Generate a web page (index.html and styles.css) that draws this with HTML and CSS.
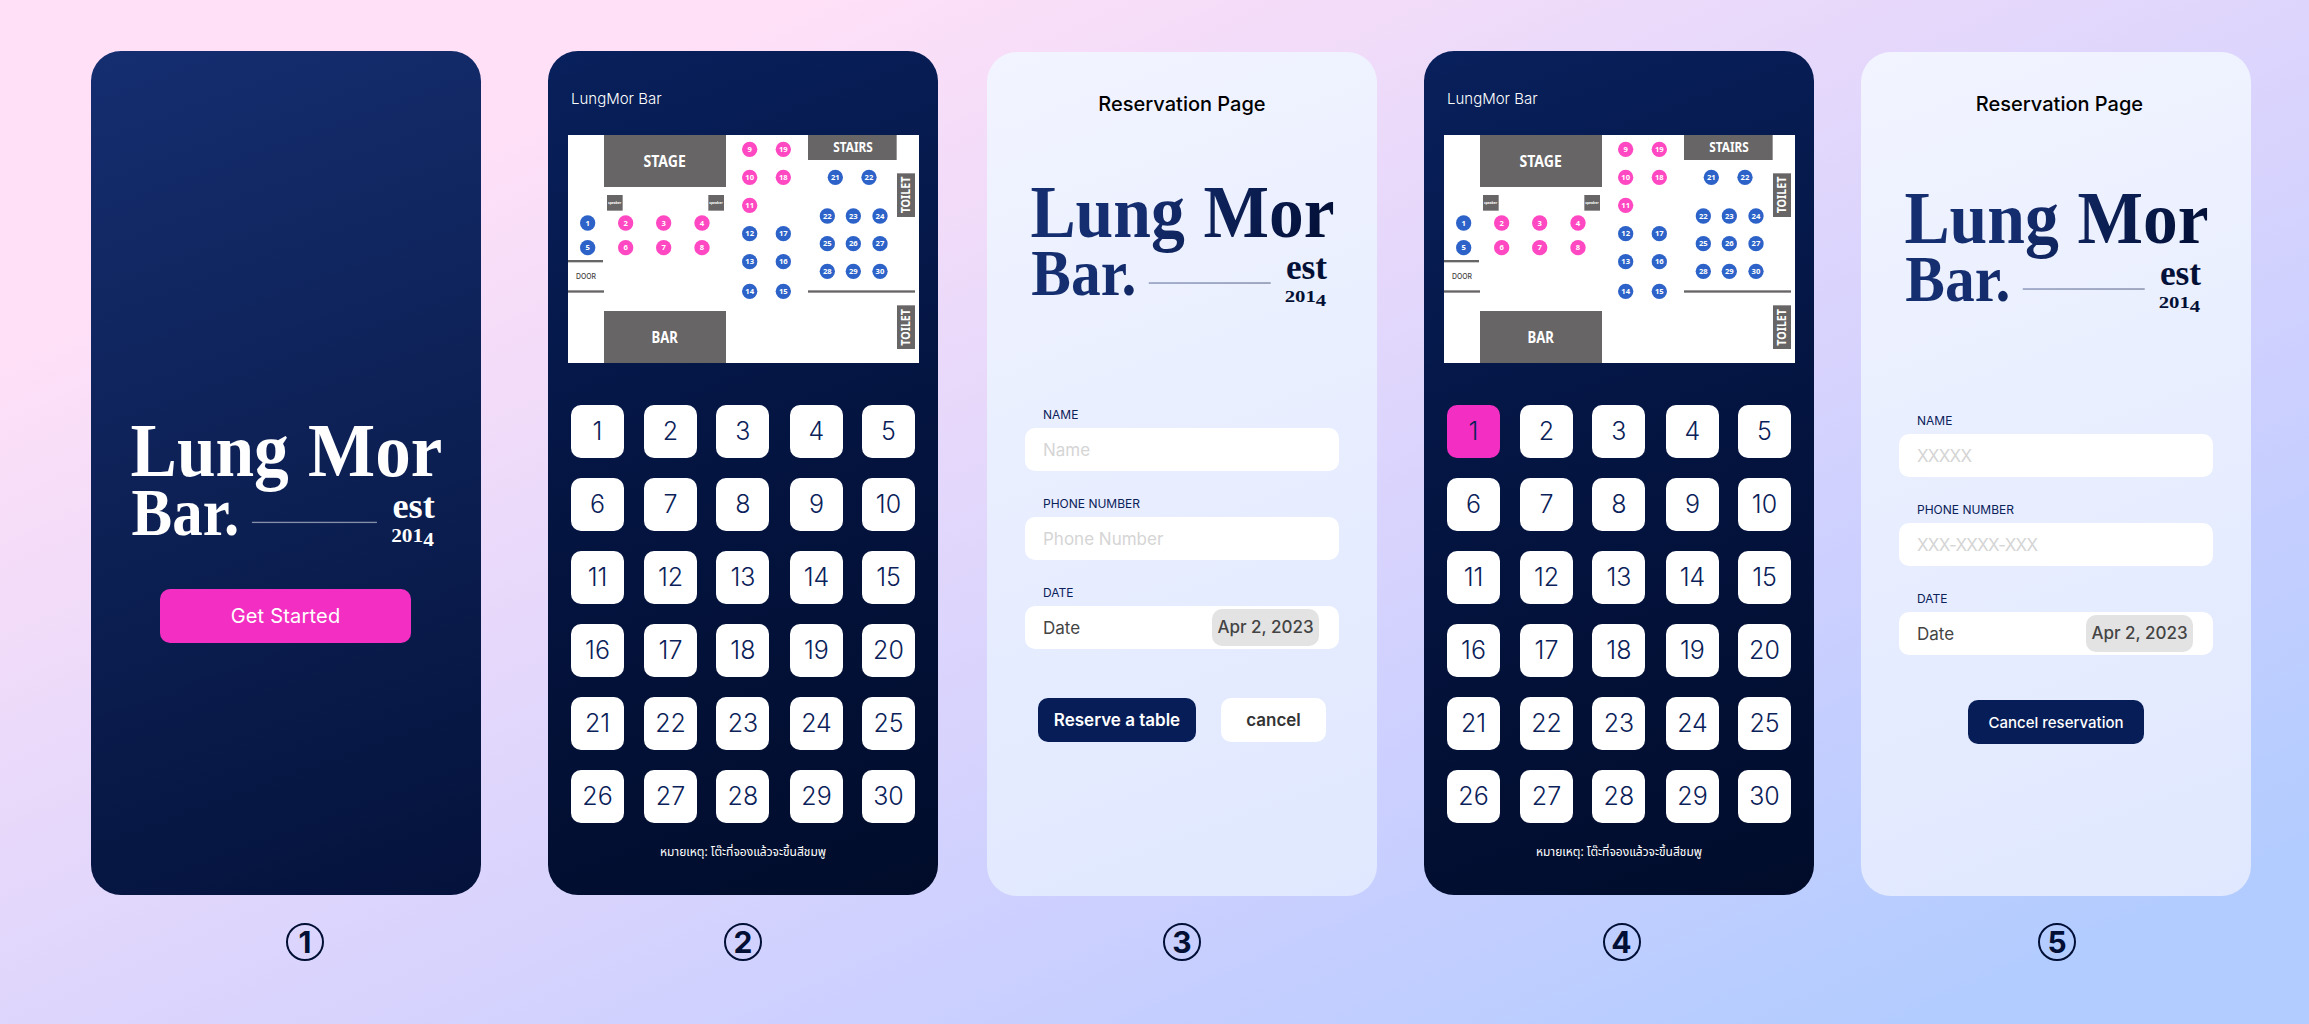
FILE: index.html
```html
<!DOCTYPE html>
<html lang="en">
<head>
<meta charset="utf-8">
<title>LungMor Bar</title>
<link rel="stylesheet" href="styles.css">
</head>
<body>
<svg class="defs" width="0" height="0" aria-hidden="true">
  <defs>
    <linearGradient id="logo-ink" gradientUnits="userSpaceOnUse" x1="330" y1="60" x2="820" y2="330">
      <stop offset="0" stop-color="#152e70"/>
      <stop offset="1" stop-color="#020f35"/>
    </linearGradient>
    <symbol id="logo" viewBox="0 0 934 370">
      <g class="logo-text">
        <text x="-2" y="152" font-size="228" textLength="476" lengthAdjust="spacingAndGlyphs">Lung</text>
        <text x="532" y="152" font-size="228" textLength="404" lengthAdjust="spacingAndGlyphs">Mor</text>
        <text x="1" y="331" font-size="202" textLength="324" lengthAdjust="spacingAndGlyphs">Bar.</text>
        <text x="786" y="281" font-size="108" textLength="127" lengthAdjust="spacingAndGlyphs">est</text>
        <text x="782" y="353" font-size="54" textLength="128" lengthAdjust="spacingAndGlyphs">201<tspan dy="12">4</tspan></text>
      </g>
      <rect class="logo-rule" x="363" y="291" width="376" height="4"/>
    </symbol>
    <symbol id="floor" viewBox="0 0 1053 684">
      <rect width="1053" height="684" fill="#fff"/>
      <g fill="#676566">
        <rect x="108" y="0" width="366" height="156"/>
        <rect x="108" y="528" width="366" height="156"/>
        <rect x="720" y="0" width="266" height="75"/>
        <rect x="987" y="115" width="54" height="131"/>
        <rect x="987" y="511" width="54" height="131"/>
        <rect x="117" y="180" width="47" height="47"/>
        <rect x="421" y="180" width="47" height="47"/>
        <rect x="0" y="375" width="105" height="7"/>
        <rect x="0" y="466" width="108" height="7"/>
        <rect x="720" y="466" width="321" height="7"/>
      </g>
      <g class="floor-label">
        <text x="290" y="95" font-size="46" textLength="127" lengthAdjust="spacingAndGlyphs">STAGE</text>
        <text x="290" y="623" font-size="46" textLength="79" lengthAdjust="spacingAndGlyphs">BAR</text>
        <text x="855" y="50" font-size="40" textLength="118" lengthAdjust="spacingAndGlyphs">STAIRS</text>
        <text transform="translate(1027 180) rotate(-90)" font-size="35" textLength="110" lengthAdjust="spacingAndGlyphs">TOILET</text>
        <text transform="translate(1027 577) rotate(-90)" font-size="35" textLength="110" lengthAdjust="spacingAndGlyphs">TOILET</text>
        <text x="140" y="208" font-size="12" textLength="40" lengthAdjust="spacingAndGlyphs">speaker</text>
        <text x="444" y="208" font-size="12" textLength="40" lengthAdjust="spacingAndGlyphs">speaker</text>
        <text class="door" x="54" y="433" font-size="23" textLength="60" lengthAdjust="spacingAndGlyphs">DOOR</text>
      </g>
      <g fill="#ff48c1">
        <circle cx="173" cy="264" r="23"/><circle cx="287" cy="264" r="23"/><circle cx="402" cy="264" r="23"/>
        <circle cx="173" cy="338" r="23"/><circle cx="287" cy="338" r="23"/><circle cx="402" cy="338" r="23"/>
        <circle cx="545" cy="43" r="23"/><circle cx="646" cy="43" r="23"/>
        <circle cx="545" cy="127" r="23"/><circle cx="646" cy="127" r="23"/>
        <circle cx="545" cy="211" r="23"/>
      </g>
      <g fill="#2d63c8">
        <circle cx="59" cy="264" r="23"/><circle cx="59" cy="338" r="23"/>
        <circle cx="545" cy="296" r="23"/><circle cx="646" cy="296" r="23"/>
        <circle cx="545" cy="380" r="23"/><circle cx="646" cy="380" r="23"/>
        <circle cx="545" cy="469" r="23"/><circle cx="646" cy="469" r="23"/>
        <circle cx="802" cy="127" r="23"/><circle cx="903" cy="127" r="23"/>
        <circle cx="778" cy="243" r="23"/><circle cx="856" cy="243" r="23"/><circle cx="936" cy="243" r="23"/>
        <circle cx="778" cy="326" r="23"/><circle cx="856" cy="326" r="23"/><circle cx="936" cy="326" r="23"/>
        <circle cx="778" cy="409" r="23"/><circle cx="856" cy="409" r="23"/><circle cx="936" cy="409" r="23"/>
      </g>
      <g class="floor-seat">
        <text x="59" y="272">1</text><text x="173" y="272">2</text><text x="287" y="272">3</text><text x="402" y="272">4</text>
        <text x="59" y="346">5</text><text x="173" y="346">6</text><text x="287" y="346">7</text><text x="402" y="346">8</text>
        <text x="545" y="51">9</text><text x="646" y="51">19</text>
        <text x="545" y="135">10</text><text x="646" y="135">18</text>
        <text x="545" y="219">11</text>
        <text x="545" y="304">12</text><text x="646" y="304">17</text>
        <text x="545" y="388">13</text><text x="646" y="388">16</text>
        <text x="545" y="477">14</text><text x="646" y="477">15</text>
        <text x="802" y="135">21</text><text x="903" y="135">22</text>
        <text x="778" y="251">22</text><text x="856" y="251">23</text><text x="936" y="251">24</text>
        <text x="778" y="334">25</text><text x="856" y="334">26</text><text x="936" y="334">27</text>
        <text x="778" y="417">28</text><text x="856" y="417">29</text><text x="936" y="417">30</text>
      </g>
    </symbol>
  </defs>
</svg>

<main class="board">
  <section class="step step-welcome">
    <div class="phone phone-welcome">
      <svg class="logo logo-light" viewBox="0 0 934 370"><use href="#logo"/></svg>
      <button class="start">Get Started</button>
    </div>
    <div class="marker">1</div>
  </section>

  <section class="step step-seats">
    <div class="phone phone-seats">
      <h1 class="brand">LungMor Bar</h1>
      <svg class="floor" viewBox="0 0 1053 684"><use href="#floor"/></svg>
      <div class="seats">
        <button class="seat">1</button><button class="seat">2</button><button class="seat">3</button><button class="seat">4</button><button class="seat">5</button>
        <button class="seat">6</button><button class="seat">7</button><button class="seat">8</button><button class="seat">9</button><button class="seat">10</button>
        <button class="seat">11</button><button class="seat">12</button><button class="seat">13</button><button class="seat">14</button><button class="seat">15</button>
        <button class="seat">16</button><button class="seat">17</button><button class="seat">18</button><button class="seat">19</button><button class="seat">20</button>
        <button class="seat">21</button><button class="seat">22</button><button class="seat">23</button><button class="seat">24</button><button class="seat">25</button>
        <button class="seat">26</button><button class="seat">27</button><button class="seat">28</button><button class="seat">29</button><button class="seat">30</button>
      </div>
      <p class="note" lang="th">หมายเหตุ: โต๊ะที่จองแล้วจะขึ้นสีชมพู</p>
    </div>
    <div class="marker">2</div>
  </section>

  <section class="step step-form">
    <div class="phone phone-form">
      <h1 class="title">Reservation Page</h1>
      <svg class="logo logo-dark" viewBox="0 0 934 370"><use href="#logo"/></svg>
      <div class="form">
        <div class="label">NAME</div>
        <div class="field"><span class="hint">Name</span></div>
        <div class="label">PHONE NUMBER</div>
        <div class="field"><span class="hint">Phone Number</span></div>
        <div class="label">DATE</div>
        <div class="field"><span class="value">Date</span><span class="chip">Apr 2, 2023</span></div>
      </div>
      <div class="actions">
        <button class="primary">Reserve a table</button>
        <button class="secondary">cancel</button>
      </div>
    </div>
    <div class="marker">3</div>
  </section>

  <section class="step step-picked">
    <div class="phone phone-seats">
      <h1 class="brand">LungMor Bar</h1>
      <svg class="floor" viewBox="0 0 1053 684"><use href="#floor"/></svg>
      <div class="seats">
        <button class="seat seat-taken">1</button><button class="seat">2</button><button class="seat">3</button><button class="seat">4</button><button class="seat">5</button>
        <button class="seat">6</button><button class="seat">7</button><button class="seat">8</button><button class="seat">9</button><button class="seat">10</button>
        <button class="seat">11</button><button class="seat">12</button><button class="seat">13</button><button class="seat">14</button><button class="seat">15</button>
        <button class="seat">16</button><button class="seat">17</button><button class="seat">18</button><button class="seat">19</button><button class="seat">20</button>
        <button class="seat">21</button><button class="seat">22</button><button class="seat">23</button><button class="seat">24</button><button class="seat">25</button>
        <button class="seat">26</button><button class="seat">27</button><button class="seat">28</button><button class="seat">29</button><button class="seat">30</button>
      </div>
      <p class="note" lang="th">หมายเหตุ: โต๊ะที่จองแล้วจะขึ้นสีชมพู</p>
    </div>
    <div class="marker">4</div>
  </section>

  <section class="step step-booked">
    <div class="phone phone-form phone-booked">
      <h1 class="title">Reservation Page</h1>
      <svg class="logo logo-dark" viewBox="0 0 934 370"><use href="#logo"/></svg>
      <div class="form">
        <div class="label">NAME</div>
        <div class="field"><span class="hint">XXXXX</span></div>
        <div class="label">PHONE NUMBER</div>
        <div class="field"><span class="hint">XXX-XXXX-XXX</span></div>
        <div class="label">DATE</div>
        <div class="field"><span class="value">Date</span><span class="chip">Apr 2, 2023</span></div>
      </div>
      <div class="actions">
        <button class="primary primary-small">Cancel reservation</button>
      </div>
    </div>
    <div class="marker">5</div>
  </section>
</main>
</body>
</html>
```
FILE: styles.css
```css
* { box-sizing: border-box; margin: 0; padding: 0; }

body {
  width: 2309px;
  height: 1024px;
  overflow: hidden;
  font-family: Inter, "Noto Sans", "Liberation Sans", sans-serif;
  background: linear-gradient(to bottom right, #ffe0f7 17%, #cdd0ff 67%, #b3ccff 91%);
}

button { border: 0; font: inherit; color: inherit; }
.defs { display: block; height: 0; }

.board { display: flex; gap: 47px; padding: 51px 0 0 91px; }
.step { width: 390px; flex: none; display: flex; flex-direction: column; align-items: center; }
.step-seats { margin-left: 20px; }
.step-form { margin-left: 2px; }

.phone {
  width: 390px;
  height: 844px;
  border-radius: 30px;
  display: flex;
  flex-direction: column;
}

.marker {
  width: 38px;
  height: 38px;
  margin-top: 28px;
  border: 2px solid #020f35;
  border-radius: 50%;
  color: #020f35;
  font-size: 30px;
  font-weight: 700;
  line-height: 34px;
  text-align: center;
}
.step-welcome .marker { margin-left: 38px; }
.step-picked .marker { margin-left: 5px; }
.step-booked .marker { margin-left: 2px; }
.step-form .marker, .step-booked .marker { margin-top: 27px; }

/* Logo */
.logo { display: block; overflow: visible; }
.logo-text { font-family: "Liberation Serif", serif; font-weight: 700; }
.logo-rule { opacity: .5; }
.logo-light { width: 311px; height: 123px; fill: #fff; }
.logo-dark { width: 303px; height: 120px; fill: url(#logo-ink); }

/* Welcome */
.phone-welcome {
  align-items: center;
  padding-top: 374px;
  background: linear-gradient(160deg, #152e70, #0c1f52 55%, #04123b);
}
.start {
  width: 251px;
  height: 54px;
  margin: 41px 1px 0 0;
  border-radius: 10px;
  background: #f32ec2;
  color: #fff;
  font-size: 20px;
  font-weight: 400;
  letter-spacing: .2px;
}

/* Seat picker */
.phone-seats { background: linear-gradient(160deg, #08205c, #041440 50%, #010c2a); }
.brand {
  height: 20px;
  margin: 38px 0 26px 23px;
  color: #fff;
  font-size: 15px;
  font-weight: 300;
  line-height: 20px;
}
.floor { display: block; width: 351px; height: 228px; margin-left: 20px; }
.floor-label { font-family: "Noto Sans", sans-serif; font-weight: 700; fill: #fff; text-anchor: middle; }
.floor-label .door { font-family: Inter, sans-serif; font-weight: 500; fill: #444; }
.floor-seat { font: 700 23px "Noto Sans", sans-serif; fill: #fff; text-anchor: middle; }

.seats {
  display: grid;
  grid-template-columns: 73px 72.4px 73.6px 72px 53px;
  row-gap: 20px;
  margin: 42px 0 0 23px;
}
.seat {
  width: 53px;
  height: 53px;
  border-radius: 10px;
  background: #fff;
  color: #0a2159;
  font-size: 25px;
  font-weight: 350;
  line-height: 53px;
  text-align: center;
}
.seat-taken { background: #f32ec2; }
.note {
  margin-top: 19px;
  color: #fff;
  font-family: "Noto Sans Thai", "Noto Sans", sans-serif;
  font-size: 12px;
  line-height: 20px;
  text-align: center;
}

/* Reservation */
.phone-form { margin-top: 1px; background: linear-gradient(160deg, #f2f4ff, #e8eeff 50%, #e0e8ff); }
.title {
  margin-top: 39px;
  color: #000;
  font-size: 20px;
  font-weight: 500;
  line-height: 26px;
  text-align: center;
}
.phone-form .logo { margin: 71px 0 0 44px; }
.form { margin: 96px 38px 0; }
.label {
  height: 24px;
  padding-left: 18px;
  color: #0a2159;
  font-size: 12px;
  line-height: 22px;
}
.field {
  display: flex;
  align-items: center;
  justify-content: space-between;
  height: 43px;
  margin-bottom: 22px;
  padding: 0 20px 0 18px;
  border-radius: 10px;
  background: #fff;
  font-size: 17px;
}
.hint { color: #d5d5d5; }
.value { color: #444; }
.chip {
  width: 107px;
  height: 37px;
  border-radius: 10px;
  background: #e3e3e3;
  color: #444;
  font-weight: 500;
  line-height: 37px;
  text-align: center;
}
.actions { display: flex; gap: 25px; margin: 27px 0 0 51px; }
.primary, .secondary { height: 44px; border-radius: 10px; font-size: 17px; font-weight: 600; }
.primary { width: 158px; background: #071d57; color: #fff; }
.secondary { width: 105px; background: #fff; color: #333; }

.phone-booked .title { padding-left: 7px; }
.phone-booked .logo { margin-top: 77px; }
.phone-booked .hint { letter-spacing: -.75px; }
.phone-booked .actions { margin: 23px 0 0 107px; }
.primary-small { width: 176px; font-size: 15px; font-weight: 500; }
```
